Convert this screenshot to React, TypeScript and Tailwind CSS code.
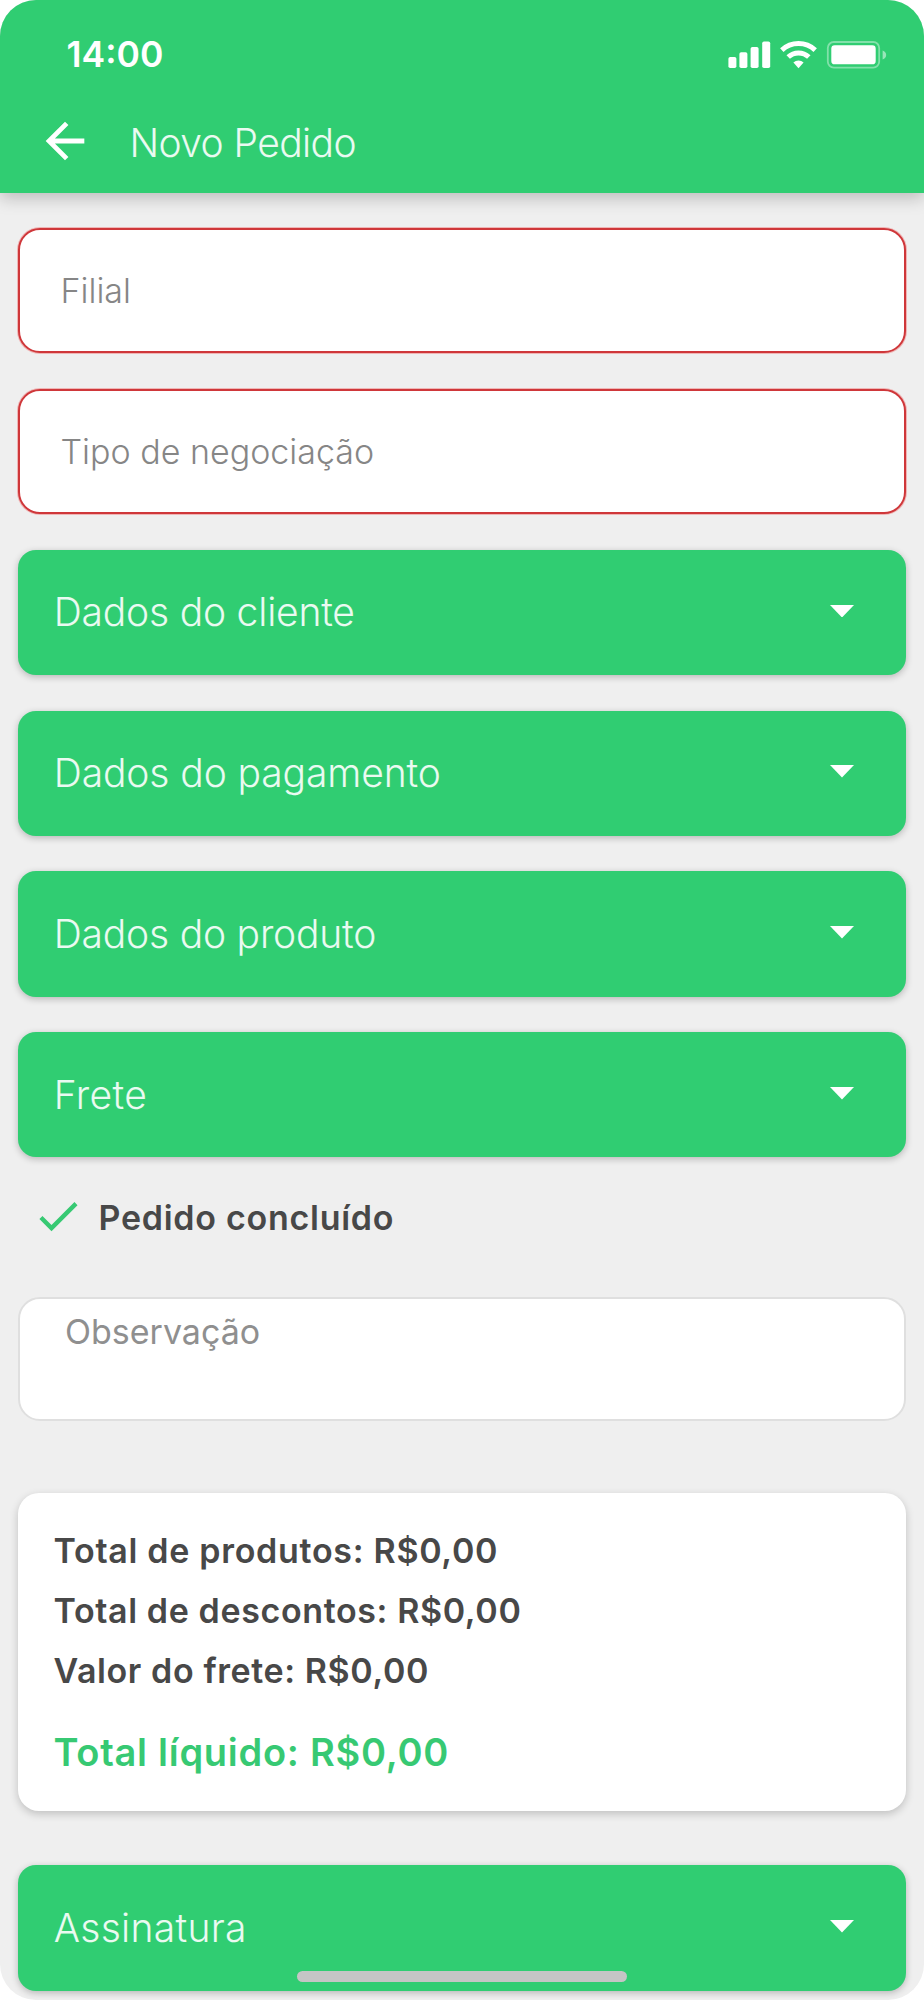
import React, { useState } from 'react';

interface SelectFieldProps {
  placeholder: string;
}

interface SectionButtonProps {
  title: string;
  className?: string;
}

const StatusIcons: React.FC = () => (
  <svg className="w-[160px] h-[28px]" viewBox="0 0 160 28" fill="none">
    {/* Signal */}
    <g fill="#fff">
      <rect x="0.4" y="16" width="8" height="11" rx="1.8" />
      <rect x="11.4" y="11.3" width="8" height="15.7" rx="1.8" />
      <rect x="22.6" y="6" width="8" height="21" rx="1.8" />
      <rect x="34.2" y="0.4" width="8" height="26.6" rx="1.8" />
    </g>
    {/* Wifi */}
    <path d="M53.8 9.1a24.5 24.5 0 0 1 33.4 0" stroke="#fff" strokeWidth="5" />
    <path d="M60.2 16a15 15 0 0 1 20.6 0" stroke="#fff" strokeWidth="5" />
    <path d="M70.5 27.2l-5.1-5.6a7.5 7.5 0 0 1 10.2 0z" fill="#fff" />
    {/* Battery */}
    <rect x="99.8" y="1" width="51.4" height="25.6" rx="6" stroke="#fff" strokeOpacity="0.4" strokeWidth="1.8" />
    <rect x="103.3" y="4.3" width="44.4" height="19" rx="3.4" fill="#fff" />
    <path d="M154.6 9.6c2.2.8 3.6 2.4 3.6 4.4s-1.4 3.6-3.6 4.4z" fill="#fff" fillOpacity="0.5" />
  </svg>
);

const SelectField: React.FC<SelectFieldProps> = ({ placeholder }) => (
  <button
    type="button"
    className="flex h-[125.3px] w-full items-center rounded-[22px] border-2 border-[#cf373a] bg-white pl-[40.5px] text-left text-[34px] font-light text-[#868686] shadow-[0_0_0_1px_rgba(240,110,110,0.45)]"
  >
    {placeholder}
  </button>
);

const SectionButton: React.FC<SectionButtonProps> = ({ title, className = '' }) => {
  const [open, setOpen] = useState(false);

  return (
    <button
      type="button"
      aria-expanded={open}
      onClick={() => setOpen(!open)}
      className={`flex h-[125.3px] w-full shrink-0 items-center justify-between rounded-[18px] bg-[#30cd72] pl-[35.7px] pr-[52.5px] text-[39px] font-light text-white/90 shadow-[0_2px_7px_rgba(0,0,0,0.24)] ${className}`}
    >
      <span>{title}</span>
      <svg className="mb-[3px] h-[12.5px] w-[24px]" viewBox="0 0 24 12.5" fill="#fff">
        <path d="M0 0h24L12 12.5z" />
      </svg>
    </button>
  );
};

const App: React.FC = () => {
  const [note, setNote] = useState('');

  return (
    <div className="bg-white font-['Inter',sans-serif]">
      <div className="relative flex h-[2000px] w-[924px] flex-col overflow-hidden rounded-[36px] bg-[#efefef]">
        <header className="h-[192.5px] shrink-0 bg-[#30cd72] text-white shadow-[0_5px_16px_rgba(0,0,0,0.22)]">
          <div className="flex h-[110px] items-center justify-between pl-[66.5px] pr-[36px]">
            <span className="text-[35.5px] font-semibold">14:00</span>
            <StatusIcons />
          </div>
          <div className="flex h-[66px] items-center pl-[36px]">
            <svg className="mb-[4.5px] h-[58px] w-[58px]" viewBox="0 0 24 24" fill="#fff">
              <path d="M20 11H7.83l5.59-5.59L12 4l-8 8 8 8 1.41-1.41L7.83 13H20v-2z" />
            </svg>
            <h1 className="ml-[35.5px] text-[39px] font-light tracking-[-0.6px] text-white/90">Novo Pedido</h1>
          </div>
        </header>

        <main className="flex flex-col px-[18px] pt-[35.7px]">
          <div className="flex flex-col gap-[35.5px]">
            <SelectField placeholder="Filial" />
            <SelectField placeholder="Tipo de negociação" />
            <SectionButton title="Dados do cliente" className="tracking-[-0.2px]" />
            <SectionButton title="Dados do pagamento" className="tracking-[-0.1px]" />
            <SectionButton title="Dados do produto" className="tracking-[-0.2px]" />
            <SectionButton title="Frete" className="tracking-[0.4px]" />
          </div>

          <div className="flex h-[120px] items-center pl-[13.5px]">
            <svg className="mb-[2px] h-[52px] w-[52px]" viewBox="0 0 24 24" fill="#37c973">
              <path d="M9 16.17L4.83 12l-1.42 1.41L9 19 21 7l-1.41-1.41z" />
            </svg>
            <span className="ml-[15px] text-[34px] font-semibold tracking-[0.73px] text-[#484848]">Pedido concluído</span>
          </div>

          <textarea
            value={note}
            onChange={(e) => setNote(e.target.value)}
            placeholder="Observação"
            className="mt-[20px] h-[124px] w-full resize-none rounded-[22px] border-2 border-[#dfdfdf] bg-white pl-[45px] pt-[11px] text-[34px] leading-[44px] placeholder:text-[#8f8f8f] focus:outline-none"
          />

          <section className="mt-[72px] h-[318px] rounded-[21px] bg-white pl-[35.5px] pt-[28px] text-[34px] font-semibold leading-[60px] tracking-[0.7px] text-[#484848] shadow-[0_3px_8px_rgba(0,0,0,0.2)]">
            <p>Total de produtos: R$0,00</p>
            <p className="tracking-[0.62px]">Total de descontos: R$0,00</p>
            <p className="tracking-[0.6px]">Valor do frete: R$0,00</p>
            <p className="mt-[20.5px] text-[38px] tracking-[0.73px] text-[#37c973]">Total líquido: R$0,00</p>
          </section>

          <SectionButton title="Assinatura" className="mt-[54px] tracking-[0.3px]" />
        </main>

        {/* Home indicator */}
        <div className="absolute left-[297px] top-[1971px] h-[11px] w-[330px] rounded-full bg-[#c5c5c5]" />
      </div>
    </div>
  );
};

export default App;
